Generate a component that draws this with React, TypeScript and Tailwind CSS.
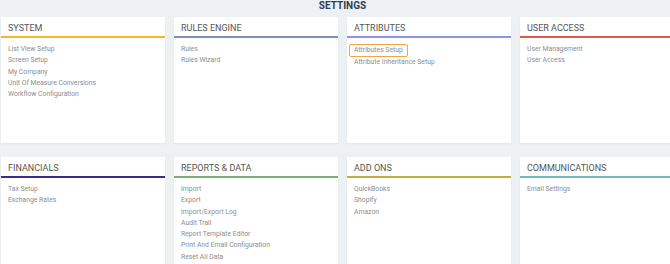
import React from "react";

type Section = {
  title: string;
  line: string;
  items: string[];
};

const SECTIONS: Section[] = [
  {
    title: "SYSTEM",
    line: "border-[#f6b62b]",
    items: [
      "List View Setup",
      "Screen Setup",
      "My Company",
      "Unit Of Measure Conversions",
      "Workflow Configuration",
    ],
  },
  {
    title: "RULES ENGINE",
    line: "border-[#7d8fb3]",
    items: ["Rules", "Rules Wizard"],
  },
  {
    title: "ATTRIBUTES",
    line: "border-[#8e95de]",
    items: ["Attributes Setup", "Attribute Inheritance Setup"],
  },
  {
    title: "USER ACCESS",
    line: "border-[#dc5a4c]",
    items: ["User Management", "User Access"],
  },
  {
    title: "FINANCIALS",
    line: "border-[#3a2c8c]",
    items: ["Tax Setup", "Exchange Rates"],
  },
  {
    title: "REPORTS & DATA",
    line: "border-[#79ad78]",
    items: [
      "Import",
      "Export",
      "Import/Export Log",
      "Audit Trail",
      "Report Template Editor",
      "Print And Email Configuration",
      "Reset All Data",
    ],
  },
  {
    title: "ADD ONS",
    line: "border-[#c4ab3c]",
    items: ["QuickBooks", "Shopify", "Amazon"],
  },
  {
    title: "COMMUNICATIONS",
    line: "border-[#72b6c0]",
    items: ["Email Settings"],
  },
];

const ACTIVE_ITEM = "Attributes Setup";

function SettingsCard({ section }: { section: Section }) {
  return (
    <div className="h-[126px] bg-white shadow-[0_1px_2px_rgba(0,0,0,0.05)]">
      <div
        className={`h-[21px] px-[7px] pt-[4px] flex items-center border-b-2 ${section.line} text-[9px] text-[#555555]`}
      >
        {section.title}
      </div>
      <ul className="pt-[6px] px-[7px] text-[6.8px] leading-[11.3px] text-[#8d8d8d]">
        {section.items.map((item) => (
          <li key={item}>
            {item === ACTIVE_ITEM ? (
              <span className="inline-block -ml-[5px] px-[4px] border border-[#f4a342] rounded-[2px] leading-[11.3px]">
                {item}
              </span>
            ) : (
              item
            )}
          </li>
        ))}
      </ul>
    </div>
  );
}

export default function App() {
  return (
    <div
      className="w-[670px] h-[264px] overflow-hidden bg-[#eef1f3]"
      style={{ fontFamily: "Roboto, 'Liberation Sans', sans-serif" }}
    >
      <div className="w-[684px] pl-[1px]">
        {/* Page title */}
        <div className="h-[17px] pb-[6px] flex items-center justify-center text-[10px] font-bold text-[#2c3e55]">
          SETTINGS
        </div>

        {/* Sections */}
        <div className="grid grid-cols-[repeat(4,164px)] gap-x-[9px] gap-y-[14px]">
          {SECTIONS.map((section) => (
            <SettingsCard key={section.title} section={section} />
          ))}
        </div>
      </div>
    </div>
  );
}
